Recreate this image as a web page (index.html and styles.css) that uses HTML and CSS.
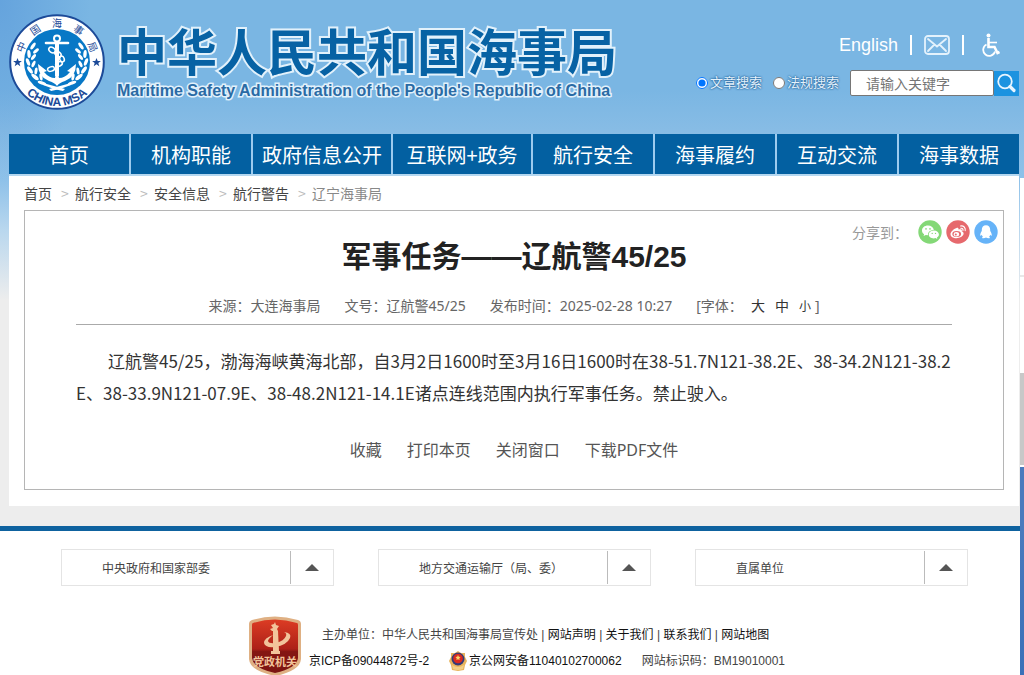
FILE: index.html
```html
<!DOCTYPE html>
<html lang="zh-CN">
<head>
<meta charset="utf-8">
<title>军事任务——辽航警45/25</title>
<link rel="stylesheet" href="styles.css">
</head>
<body>
<div class="page">
  <header class="header">
    <a class="brand" href="#">
      <svg class="emblem" viewBox="0 0 96 96" role="img" aria-label="中国海事局 CHINA MSA">
        <defs>
          <path id="arc-bottom" d="M4 48 A44 44 0 0 0 92 48"/>
          <g id="laurel" fill="#fff">
            <ellipse cx="24" cy="32" rx="1.600" ry="4" transform="rotate(35 24 32)"/>
            <ellipse cx="27" cy="37" rx="1.500" ry="3.500" transform="rotate(50 27 37)"/>
            <ellipse cx="20" cy="40" rx="1.700" ry="4" transform="rotate(-5 20 40)"/>
            <ellipse cx="24.500" cy="43" rx="1.500" ry="3.500" transform="rotate(38 24.500 43)"/>
            <ellipse cx="19" cy="48" rx="1.700" ry="4" transform="rotate(-20 19 48)"/>
            <ellipse cx="24.500" cy="50" rx="1.500" ry="3.500" transform="rotate(25 24.500 50)"/>
            <ellipse cx="21" cy="56" rx="1.800" ry="4.200" transform="rotate(-35 21 56)"/>
            <ellipse cx="27" cy="57" rx="1.500" ry="3.500" transform="rotate(8 27 57)"/>
            <ellipse cx="26" cy="63" rx="1.800" ry="4.500" transform="rotate(-50 26 63)"/>
            <ellipse cx="32" cy="63" rx="1.500" ry="3.500" transform="rotate(-10 32 63)"/>
            <ellipse cx="33" cy="69" rx="1.700" ry="4.500" transform="rotate(-70 33 69)"/>
            <path d="M34 69 Q45 72 56 75 L54 77 Q43 75 34 71Z"/>
          </g>
          <path id="star" d="M0-4.500 1.200-1.400 4.400-1.400 1.800.6 2.800 3.700 0 1.800-2.800 3.700-1.800.6-4.400-1.400-1.200-1.400Z"/>
        </defs>
        <circle cx="48" cy="48" r="46.800" fill="#fff" stroke="#1c4a98" stroke-width="2"/>
        <circle cx="48" cy="48" r="33" fill="#0878c6"/>
        <use href="#laurel"/>
        <use href="#laurel" transform="translate(96 0) scale(-1 1)"/>
        <g fill="none" stroke="#fff">
          <circle cx="48" cy="24.500" r="3" stroke-width="2"/>
          <path d="M48 28v34" stroke-width="4"/>
          <path d="M37 29h22" stroke-width="2.600" stroke-linecap="round"/>
          <g stroke-width="1.500">
            <ellipse cx="43" cy="36" rx="3.500" ry="2.500" transform="rotate(35 43 36)"/>
            <ellipse cx="49" cy="40" rx="3.500" ry="2.200" transform="rotate(35 49 40)"/>
            <ellipse cx="53" cy="45" rx="3" ry="2.200" transform="rotate(70 53 45)"/>
            <ellipse cx="50" cy="50" rx="3.500" ry="2.200" transform="rotate(-25 50 50)"/>
            <ellipse cx="42" cy="55" rx="3.500" ry="2.200" transform="rotate(-15 42 55)"/>
          </g>
        </g>
        <path d="M29 50 L38 57 35 58 Q40 64 46 64 L48 54 50 64 Q56 64 61 58 L58 57 67 50 Q67 63 56 67 Q50 69 48 72 Q46 69 40 67 Q29 63 29 50Z" fill="#fff"/>
        <g class="emblem-cn">
          <text x="48" y="13" transform="rotate(-67 48 48)">中</text>
          <text x="48" y="13" transform="rotate(-34 48 48)">国</text>
          <text x="48" y="13">海</text>
          <text x="48" y="13" transform="rotate(34 48 48)">事</text>
          <text x="48" y="13" transform="rotate(67 48 48)">局</text>
        </g>
        <text class="emblem-en"><textPath href="#arc-bottom" startOffset="50%">CHINA MSA</textPath></text>
        <use href="#star" x="8.500" y="48.500" fill="#1c4a98"/>
        <use href="#star" x="87.500" y="48.500" fill="#1c4a98"/>
      </svg>
      <span class="brand-text">
        <span class="brand-cn">中华人民共和国海事局</span>
        <span class="brand-en">Maritime Safety Administration of the People's Republic of China</span>
      </span>
    </a>
    <div class="tools">
      <div class="quick">
        <a class="english" href="#">English</a>
        <span class="bar"></span>
        <a href="#" aria-label="邮箱">
          <svg class="icon-mail" viewBox="0 0 26 20" fill="none" stroke="#e4f2fc" stroke-width="1.800">
            <rect x="1" y="1" width="24" height="18" rx="3"/>
            <path d="M4 4l9 7.500L22 4M4 16l6-6M22 16l-6-6" stroke-linecap="round"/>
          </svg>
        </a>
        <span class="bar"></span>
        <a class="access" href="#" aria-label="无障碍">
          <svg class="icon-access" viewBox="0 0 18 24" fill="none" stroke="#fff" stroke-width="2">
            <circle cx="6.500" cy="2.500" r="2" fill="#fff" stroke="none"/>
            <path d="M6.500 5v9h6l3 6 2-1" stroke-width="2.600"/>
            <path d="M7 9.500h8" stroke-width="1.600"/>
            <path d="M4.500 11.500a6 6 0 1 0 8.500 7" stroke-width="1.800"/>
          </svg>
        </a>
      </div>
      <form class="search">
        <label class="kind"><input type="radio" name="kind" checked>文章搜索</label>
        <label class="kind"><input type="radio" name="kind">法规搜索</label>
        <input class="keyword" type="text" placeholder="请输入关键字" aria-label="请输入关键字">
        <button class="go" type="button" aria-label="搜索">
          <svg viewBox="0 0 24 24" width="24" height="24" fill="none" stroke="#e8f5ff">
            <circle cx="11" cy="10.500" r="6.800" stroke-width="1.800"/>
            <path d="M16 15.500l4 4" stroke-width="3.200" stroke-linecap="round"/>
          </svg>
        </button>
      </form>
    </div>
  </header>

  <nav class="nav">
    <a href="#">首页</a>
    <a href="#">机构职能</a>
    <a href="#">政府信息公开</a>
    <a href="#">互联网+政务</a>
    <a href="#">航行安全</a>
    <a href="#">海事履约</a>
    <a href="#">互动交流</a>
    <a href="#">海事数据</a>
  </nav>

  <main class="main">
    <div class="crumbs">
      <a href="#">首页</a><i>&gt;</i><a href="#">航行安全</a><i>&gt;</i><a href="#">安全信息</a><i>&gt;</i><a href="#">航行警告</a><i>&gt;</i><span>辽宁海事局</span>
    </div>
    <article class="article">
      <div class="share">
        <span class="share-label">分享到：</span>
        <a href="#" aria-label="微信">
          <svg viewBox="0 0 24 24" width="24" height="24">
            <circle cx="12" cy="12" r="11.700" fill="#84d877"/>
            <path d="M10 5.500c-3.600 0-6 2.200-6 4.900 0 1.600.8 2.900 2.100 3.800L5.600 16l2.200-1.100 2.200.3c-.3-3.100 2.200-5.400 5.800-5.300C15.300 7.300 13 5.500 10 5.500Z" fill="#fff"/>
            <path d="M15.800 10.600c-3 0-5.100 1.800-5.100 3.900s2.200 3.900 5.100 3.900l1.700-.3 1.800 1-.4-1.600c1.200-.7 2-1.700 2-3 0-2.100-2.100-3.900-5.100-3.900Z" fill="#fff"/>
            <g fill="#84d877"><circle cx="8" cy="8.900" r=".8"/><circle cx="12" cy="8.900" r=".8"/><circle cx="14.200" cy="13.400" r=".7"/><circle cx="17.500" cy="13.400" r=".7"/></g>
          </svg>
        </a>
        <a href="#" aria-label="微博">
          <svg viewBox="0 0 24 24" width="24" height="24">
            <circle cx="12" cy="12" r="11.700" fill="#e6696d"/>
            <path d="M10.500 8c1.200-.4 2.300 0 2 1.600 2-.8 4-.4 3.300 1.700 1.400.5 2.200 1.500 1.700 3-.7 2.300-3.800 3.900-7 3.900-3.400 0-6-1.600-6-4 0-2.200 3-5.200 6-6.200Z" fill="#fff"/>
            <ellipse cx="10.700" cy="14" rx="4.400" ry="2.900" fill="#e6696d"/>
            <ellipse cx="10.400" cy="14.200" rx="2.700" ry="2.200" fill="#fff"/>
            <circle cx="9.800" cy="14.600" r="1" fill="#e6696d"/>
            <path d="M14.500 6c3-.6 5.300 1.700 4.700 4.700M14.800 8.300c1.400-.3 2.500.8 2.200 2.200" fill="none" stroke="#fff" stroke-width="1.100" stroke-linecap="round"/>
          </svg>
        </a>
        <a href="#" aria-label="QQ">
          <svg viewBox="0 0 24 24" width="24" height="24">
            <circle cx="12" cy="12" r="11.700" fill="#66b3f8"/>
            <path d="M12 5.200c-2.700 0-4.200 1.900-4.200 4.500v1.200c-1 1.400-1.700 3-1.600 4.600.5.400 1.100-.2 1.500-.8.200.8.600 1.400 1.200 2-1.200.5-1 1.600.4 1.600 1.200 0 2.100-.3 2.700-.8.600.5 1.500.8 2.700.8 1.400 0 1.600-1.100.4-1.600.6-.6 1-1.200 1.200-2 .4.600 1 1.200 1.500.8.100-1.600-.6-3.200-1.600-4.600V9.700c0-2.600-1.500-4.500-4.200-4.500Z" fill="#fff"/>
          </svg>
        </a>
      </div>
      <h1 class="title">军事任务——辽航警45/25</h1>
      <div class="meta">
        <span>来源：大连海事局</span>
        <span>文号：辽航警45/25</span>
        <span>发布时间：2025-02-28 10:27</span>
        <span class="sizes">[字体：<button type="button">大</button><button type="button">中</button><button class="small" type="button">小</button>]</span>
      </div>
      <p class="body-text">辽航警45/25，渤海海峡黄海北部，自3月2日1600时至3月16日1600时在38-51.7N121-38.2E、38-34.2N121-38.2E、38-33.9N121-07.9E、38-48.2N121-14.1E诸点连线范围内执行军事任务。禁止驶入。</p>
      <div class="actions">
        <a href="#">收藏</a>
        <a href="#">打印本页</a>
        <a href="#">关闭窗口</a>
        <a href="#">下载PDF文件</a>
      </div>
    </article>
  </main>
</div>

<footer class="footer">
  <div class="menus">
    <button class="menu" type="button"><span>中央政府和国家部委</span><i class="arrow"></i></button>
    <button class="menu" type="button"><span>地方交通运输厅（局、委）</span><i class="arrow"></i></button>
    <button class="menu" type="button"><span>直属单位</span><i class="arrow"></i></button>
  </div>
  <div class="legal">
    <svg class="badge" viewBox="0 0 54 60" role="img" aria-label="党政机关">
      <defs><linearGradient id="red" x1="0" y1="0" x2="0" y2="1"><stop offset="0" stop-color="#dc3c24"/><stop offset=".55" stop-color="#ad2118"/><stop offset=".6" stop-color="#851612"/><stop offset="1" stop-color="#7c1512"/></linearGradient></defs>
      <path d="M4 4Q27-3 50 4Q53 5 53 8V43Q52 55 27 60Q2 55 1 43V8Q1 5 4 4Z" fill="#dfb083"/>
      <path d="M5 7Q27 0 49 7Q50 7 50 9V42Q49 52 27 57Q5 52 4 42V9Q4 7 5 7Z" fill="url(#red)"/>
      <g fill="#f2c49b">
        <path d="M25 12l-2-3 3-1 1-2 1 3 3 1-2 3 1 2h-6l-2-2Z"/>
        <path d="M25 15h5l1 20h-6Z"/>
        <path d="M23 35h9v3h-9Z"/>
        <path d="M36 16Q44 17 42 22 39 29 27 31 17 32 16 27 16 22 25 19 20 23 20 25 21 28 28 27 36 25 38 20 39 17 36 16Z"/>
      </g>
      <text class="badge-text" x="27" y="50">党政机关</text>
    </svg>
    <div class="legal-lines">
      <p class="line sponsor"><span>主办单位：中华人民共和国海事局宣传处 | </span><a href="#">网站声明</a> | <a href="#">关于我们</a> | <a href="#">联系我们</a> | <a href="#">网站地图</a></p>
      <p class="line codes">
        <a href="#">京ICP备09044872号-2</a>
        <a class="police" href="#"><svg viewBox="0 0 18 20" width="18" height="20">
          <path d="M9 0l3 2 4 0 0 4 2 4-2 4-1 5-6 1-6-1-1-5-2-4 2-4V2h4Z" fill="#e8b45c"/>
          <circle cx="9" cy="8" r="6.500" fill="#343a78"/>
          <circle cx="9" cy="7.500" r="4.800" fill="#d92b20"/>
          <path d="M9 4l.8 1.700 1.800.2-1.300 1.300.3 1.800L9 8.200 7.400 9l.3-1.800-1.300-1.300 1.800-.2Z" fill="#f8d66b"/>
          <path d="M3 14q6 4 12 0l-1 4q-5 2-10 0Z" fill="#f2cf86"/>
        </svg>京公网安备11040102700062</a>
        <span>网站标识码：BM19010001</span>
      </p>
    </div>
  </div>
</footer>
<div class="side-tab"></div>
</body>
</html>
```
FILE: styles.css
```css
* { box-sizing: border-box; }

body {
  margin: 0;
  background: #fff;
  color: #444;
  font-family: "Liberation Sans", "Noto Sans CJK SC", sans-serif;
}

a { color: inherit; text-decoration: none; }
i { font-style: normal; }
button { font: inherit; color: inherit; cursor: pointer; }
svg { display: block; flex: none; }

.page {
  padding: 0 5px 20px 9px;
  background:
    radial-gradient(ellipse 90px 180px at 0 0, rgba(80, 145, 215, .5), transparent),
    linear-gradient(#7ab6e3 0, #7ab6e3 90px, #87bce5 130px, #8ec1e9 180px, #b9d7ee 230px, #ededed 300px);
}

.header {
  display: flex;
  justify-content: space-between;
  height: 134px;
}

.brand { display: flex; gap: 12px; padding-top: 14px; }
.emblem { width: 96px; height: 96px; }
.emblem-cn { font: 10px "Noto Sans CJK SC", sans-serif; fill: #1c4a98; text-anchor: middle; }
.emblem-en { font: bold 12px "Liberation Sans", sans-serif; fill: #1c4a98; text-anchor: middle; }
.brand-text { display: flex; flex-direction: column; padding-top: 10px; white-space: nowrap; }
.brand-cn,
.brand-en { color: #0762a4; -webkit-text-stroke: 4px #e2f1fb; paint-order: stroke fill; }
.brand-cn { font: bold 50px/50px "Noto Sans CJK SC", sans-serif; }
.brand-en { font-size: 16px; font-weight: bold; line-height: 34px; -webkit-text-stroke-width: 3px; color: #2a6ba5; }

.tools { display: flex; flex-direction: column; align-items: flex-end; padding-top: 34px; }
.quick { display: flex; align-items: center; gap: 12px; height: 22px; padding-right: 19px; color: #fff; }
.english { font-size: 18px; }
.bar { width: 2px; height: 20px; background: #fff; }
.icon-mail { width: 26px; height: 20px; }
.icon-access { width: 18px; height: 24px; }
.access { padding-left: 6px; }

.search { display: flex; align-items: center; margin-top: 14px; }
.kind {
  display: flex;
  align-items: center;
  gap: 2px;
  margin-right: 11px;
  color: #e4f2fd;
  font-size: 13px;
  line-height: 20px;
  text-shadow: 0 0 2px #1e5f96, 0 0 2px #1e5f96;
}
.kind input { width: 12px; height: 12px; margin: 0; }
.keyword {
  width: 144px;
  height: 26px;
  padding: 0 15px;
  border: 1px solid #767676;
  border-radius: 2px;
  background: #fff;
  font: 14px "Noto Sans CJK SC", sans-serif;
}
.keyword::placeholder { color: #757575; }
.go { width: 25px; height: 25px; padding: 0; border: 0; background: #1c93e0; }

.nav {
  display: grid;
  grid-template-columns: 120fr 120fr 138fr 138fr 120fr 120fr 120fr 120fr;
  gap: 2px;
  border-bottom: 2px solid #b4d7f0;
  background: #9dcbee;
}
.nav a {
  padding-top: 1px;
  background: #0360a1;
  color: #fff;
  font: 20px/39px "Noto Sans CJK SC", sans-serif;
  text-align: center;
  white-space: nowrap;
}

.main {
  padding: 0 15px 16px;
  background: #fff;
  font-family: "Noto Sans CJK SC", sans-serif;
}
.crumbs { display: flex; height: 34px; font-size: 14px; line-height: 34px; }
.crumbs i { width: 23px; padding-left: 9px; color: #bbb; }
.crumbs span { color: #888; }

.article {
  position: relative;
  padding: 24px 51px 26px;
  border: 1px solid #b5b5b5;
}
.share { position: absolute; top: 9px; right: 5px; display: flex; align-items: center; gap: 4px; }
.share-label { width: 62px; color: #999; font-size: 14px; white-space: nowrap; }
.title {
  margin: 0;
  color: #222;
  font-family: "Liberation Sans", "Noto Sans CJK SC", sans-serif;
  font-size: 30px;
  line-height: 44px;
  text-align: center;
}
.meta {
  display: flex;
  justify-content: center;
  gap: 24px;
  margin-top: 10px;
  border-bottom: 1px solid #aaa;
  color: #666;
  font-family: "Noto Sans", "Noto Sans CJK SC", sans-serif;
  font-size: 14px;
  line-height: 34px;
}
.sizes button { margin-right: 10px; padding: 0; border: 0; background: none; color: #333; }
.sizes button:first-child { margin-left: 8px; }
.sizes .small { margin-right: 4px; font-size: 12px; }
.body-text {
  margin: 20px 0 0;
  color: #333;
  font-size: 17px;
  line-height: 32px;
  text-indent: 32px;
  word-break: break-all;
}
.actions {
  display: flex;
  justify-content: center;
  gap: 25px;
  margin-top: 28px;
  color: #555;
  font-family: "Noto Sans", "Noto Sans CJK SC", sans-serif;
  font-size: 16px;
  line-height: 26px;
}

.footer { padding: 18px 56px 0 61px; border-top: 5px solid #0e629f; font-size: 12px; }
.menus { display: flex; justify-content: space-between; }
.menu {
  display: flex;
  width: 273px;
  height: 37px;
  padding: 1px 0 1px 40px;
  border: 1px solid #e4e4e4;
  background: #fff;
  color: #444;
  text-align: left;
}
.menu span { flex: 1; line-height: 36px; }
.arrow { display: grid; place-items: center; width: 43px; border-left: 1px solid #bbb; }
.arrow::before {
  content: "";
  border: 7px solid transparent;
  border-top: 0;
  border-bottom-color: #555;
}

.legal { display: flex; gap: 7px; margin-top: 30px; padding-left: 187px; }
.badge { width: 54px; height: 60px; }
.badge-text { font: bold 11px "Noto Sans CJK SC", sans-serif; fill: #f2c49b; text-anchor: middle; }
.legal-lines { padding-top: 6px; white-space: nowrap; }
.line { margin: 0; line-height: 26px; }
.sponsor { padding-left: 13px; }
.line a { color: #111; }
.codes { display: flex; gap: 20px; }
.police { display: flex; align-items: center; gap: 2px; }

.side-tab {
  position: fixed;
  top: 178px;
  right: 0;
  bottom: 0;
  width: 4px;
  background: linear-gradient(#fff 0 97px, #e8e8e8 97px 99px, #fff 99px 195px, #c8c8c8 195px 287px, #fff 287px 289px, #4a7abd 289px 350px, #3a70b8 100%);
}
```
